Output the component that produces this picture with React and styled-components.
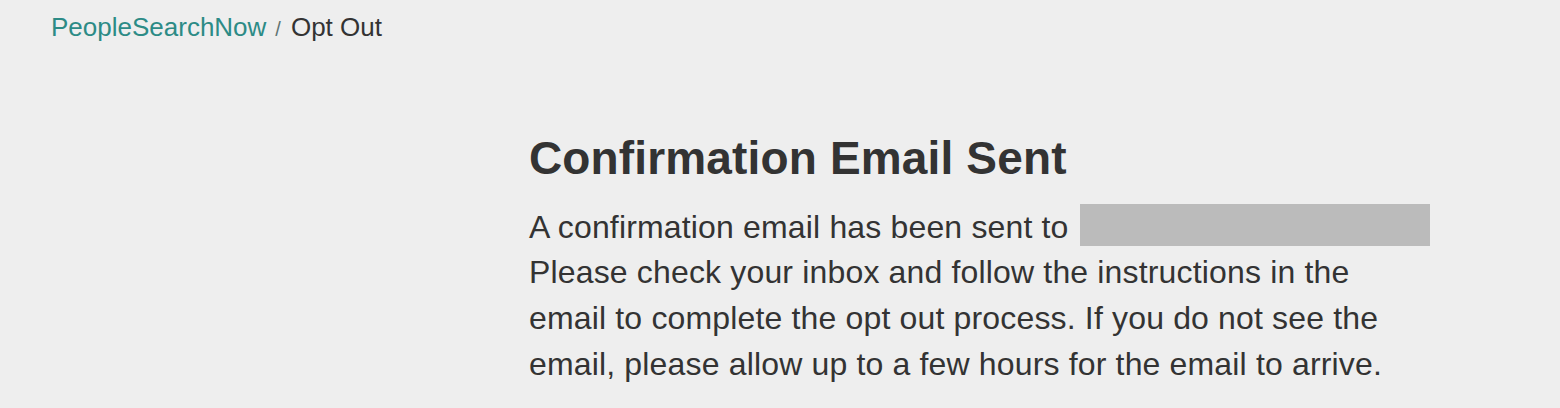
import React from "react";
import styled, { createGlobalStyle } from "styled-components";

const Global = createGlobalStyle`
  html, body {
    margin: 0;
    padding: 0;
    background: #eeeeee;
  }
  body {
    font-family: "Liberation Sans", Arial, Helvetica, sans-serif;
    color: #333333;
  }
`;

const Page = styled.div`
  min-height: 408px;
  padding: 9px 51px 0;
  box-sizing: border-box;
`;

const Breadcrumb = styled.nav`
  display: flex;
  align-items: baseline;
  font-size: 26px;
  line-height: 37px;
`;

const Crumb = styled.a`
  color: ${(p) => (p.$active ? "#333333" : "#2c8b86")};
  text-decoration: none;
`;

const Sep = styled.span`
  font-size: 20px;
  color: #5f7473;
  margin: 0 10px 0 9px;
`;

const Content = styled.section`
  display: grid;
  grid-template-columns: 478px 901px;
  margin-top: 85px;
`;

const Card = styled.div`
  grid-column: 2;
`;

const Title = styled.h2`
  margin: 0 0 20px;
  font-size: 46px;
  line-height: 1.1;
  font-weight: 700;
  letter-spacing: 0.15px;
  color: #333333;
`;

const Text = styled.p`
  margin: 0;
  font-size: 32px;
  line-height: 45.7px;
  letter-spacing: 0.16px;
  color: #333333;
`;

const Redacted = styled.span`
  display: inline-block;
  width: 350px;
  height: 42px;
  background: #bbbbbb;
  vertical-align: -8px;
  margin-left: 2px;
`;

export default function App() {
  return (
    <>
      <Global />
      <Page>
        <Breadcrumb>
          <Crumb href="#">PeopleSearchNow</Crumb>
          <Sep>/</Sep>
          <Crumb $active>Opt Out</Crumb>
        </Breadcrumb>
        <Content>
          <Card>
            <Title>Confirmation Email Sent</Title>
            <Text>
              A confirmation email has been sent to <Redacted />
              <br />
              Please check your inbox and follow the instructions in the email
              to complete the opt out process. If you do not see the email,
              please allow up to a few hours for the email to arrive.
            </Text>
          </Card>
        </Content>
      </Page>
    </>
  );
}
